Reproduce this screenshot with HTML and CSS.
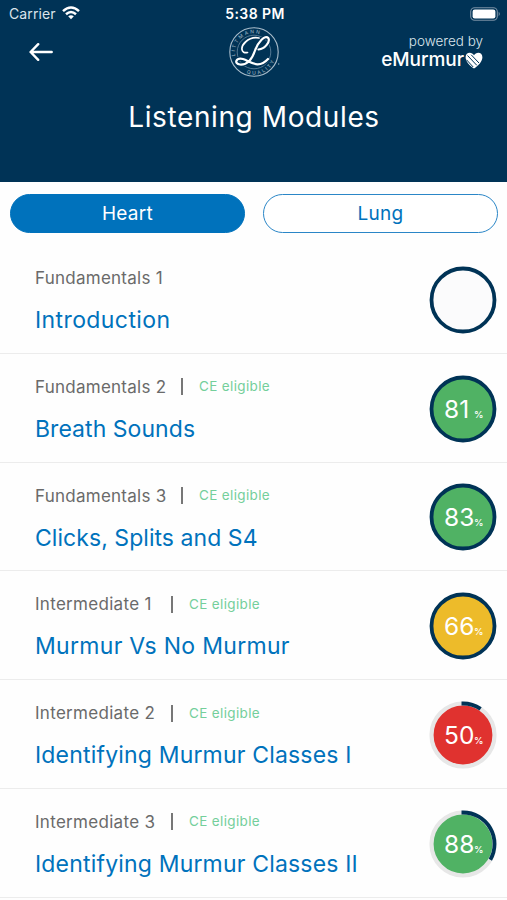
FILE: index.html
```
<!DOCTYPE html>
<html lang="en">
<head>
<meta charset="utf-8">
<title>Listening Modules</title>
<link rel="stylesheet" href="styles.css">
</head>
<body>
<header class="header">
  <div class="status">
    <div class="carrier">Carrier
      <svg class="wifi" width="18" height="14" viewBox="0 0 18 14" fill="none" stroke="#fff" stroke-width="2.5"><path d="M1 5.1Q9-2.1 17 5.1M4 8.2Q9 3.8 14 8.2"/><path d="M6.2 10.3Q9 8 11.8 10.3L9 13.3z" fill="#fff" stroke="none"/></svg>
    </div>
    <div class="time">5:38 PM</div>
    <svg class="battery" width="31" height="14" viewBox="0 0 31 14"><rect x=".7" y=".7" width="26.6" height="12.6" rx="4" fill="none" stroke="#7890a4" stroke-width="1.1"/><rect x="2.6" y="2.5" width="22.8" height="9" rx="2.2" fill="#fff"/><path d="M28.7 4.8q2.2 2.2 0 4.4z" fill="#7890a4"/></svg>
  </div>
  <div class="nav">
    <svg class="back" width="24" height="20" viewBox="0 0 24 20" fill="none" stroke="#fff" stroke-width="2.4" stroke-linecap="round" stroke-linejoin="round"><path d="M22.7 10H1.6M9.2 2.2 1.6 10l7.6 7.8"/></svg>
    <svg class="seal" width="52" height="52" viewBox="0 0 52 52" fill="none">
      <circle cx="26" cy="26" r="24.2" stroke="#a9bdcb" stroke-width="1.1"/>
      <circle cx="26" cy="26" r="16.8" stroke="#5f819b" stroke-width=".9"/>
      <path id="seal-top" d="M7.400 30.200A19 19 0 1 1 44.600 30.200"/>
      <path id="seal-bottom" d="M15 45.800A22.400 22.400 0 0 0 46.800 34"/>
      <text class="seal-text"><textPath href="#seal-top" startOffset="0">LITTMANN</textPath></text>
      <text class="seal-text"><textPath href="#seal-bottom" startOffset="4">QUALITY</textPath></text>
      <path class="letter-edge" d="M30.500 23.500C37 23 42.500 15.500 40.300 12C37 8.500 30 16 27 24.500C24 33.500 18.500 39 12 38.500C5.500 37.500 8 31.500 15 33C22 35 30 44 40 33"/>
      <path class="letter" d="M30.500 23.500C37 23 42.500 15.500 40.300 12C37 8.500 30 16 27 24.500C24 33.500 18.500 39 12 38.500C5.500 37.500 8 31.500 15 33C22 35 30 44 40 33"/>
      <path class="curl" d="M19.500 26.500C13 28 12 21 17.500 16C21 12.700 26 11 31 12"/>
      <circle cx="50.700" cy="38" r=".7" fill="#8fa8ba"/>
    </svg>
    <div class="brand">
      <div class="powered">powered by</div>
      <div class="name"><span>eMurmur</span>
        <svg width="18" height="17" viewBox="0 0 18 17"><path d="M9 3.200C11-.4 17.400-.3 17.400 5.200C17.400 9.600 13.500 13 10.200 15.800Q9 16.800 7.800 15.800C4.500 13 .6 9.600.6 5.200C.6-.3 7-.4 9 3.200z" fill="#fff"/><path d="M1.500 7.800 8.200 15M2.500 3.500 11.800 13.300M6.200 2.800 14 11" fill="none" stroke="#003356" stroke-width="1"/></svg>
      </div>
    </div>
  </div>
  <h1 class="title">Listening Modules</h1>
</header>
<nav class="tabs">
  <button class="tab active">Heart</button>
  <button class="tab">Lung</button>
</nav>
<main class="list">
  <section class="row">
    <div class="info"><div class="meta"><span class="level">Fundamentals 1</span></div><h2 class="module">Introduction</h2></div>
    <div class="score"><svg class="ring" viewBox="0 0 68 68"><circle class="full" cx="34" cy="34" r="31.500" fill="#fbfbfc"/></svg></div>
  </section>
  <section class="row">
    <div class="info"><div class="meta"><span class="level">Fundamentals 2</span><i class="bar"></i><span class="ce">CE eligible</span></div><h2 class="module tight">Breath Sounds</h2></div>
    <div class="score"><svg class="ring" viewBox="0 0 68 68"><circle class="full" cx="34" cy="34" r="31.500" fill="#50b264"/></svg><div class="value"><span>81</span><small>%</small></div></div>
  </section>
  <section class="row">
    <div class="info"><div class="meta"><span class="level">Fundamentals 3</span><i class="bar"></i><span class="ce">CE eligible</span></div><h2 class="module tight">Clicks, Splits and S4</h2></div>
    <div class="score"><svg class="ring" viewBox="0 0 68 68"><circle class="full" cx="34" cy="34" r="31.500" fill="#50b264"/></svg><div class="value"><span>83</span><small>%</small></div></div>
  </section>
  <section class="row">
    <div class="info"><div class="meta"><span class="level mid">Intermediate 1</span><i class="bar"></i><span class="ce">CE eligible</span></div><h2 class="module wide">Murmur Vs No Murmur</h2></div>
    <div class="score"><svg class="ring" viewBox="0 0 68 68"><circle class="full" cx="34" cy="34" r="31.500" fill="#edbb2a"/></svg><div class="value"><span>66</span><small>%</small></div></div>
  </section>
  <section class="row">
    <div class="info"><div class="meta"><span class="level mid">Intermediate 2</span><i class="bar"></i><span class="ce">CE eligible</span></div><h2 class="module snug">Identifying Murmur Classes I</h2></div>
    <div class="score"><svg class="ring" viewBox="0 0 68 68"><circle class="track" cx="34" cy="34" r="31.500" fill="#e0322f"/><path class="arc" d="M32.500 2.500H34A31.500 31.500 0 0 1 51.600 7.900"/></svg><div class="value"><span>50</span><small>%</small></div></div>
  </section>
  <section class="row">
    <div class="info"><div class="meta"><span class="level mid">Intermediate 3</span><i class="bar"></i><span class="ce">CE eligible</span></div><h2 class="module snug">Identifying Murmur Classes II</h2></div>
    <div class="score"><svg class="ring" viewBox="0 0 68 68"><circle class="track" cx="34" cy="34" r="31.500" fill="#50b264"/><path class="arc" d="M32.500 2.500H34A31.500 31.500 0 0 1 61.300 49.750"/></svg><div class="value"><span>88</span><small>%</small></div></div>
  </section>
</main>
</body>
</html>
```
FILE: styles.css
```
* { box-sizing: border-box; }
body {
  margin: 0;
  height: 900px;
  overflow: hidden;
  background: #fefefe;
  font-family: Inter, "Liberation Sans", sans-serif;
}
.header { height: 181.500px; background: #003356; color: #fff; }
.status {
  display: grid;
  grid-template-columns: 1fr auto 1fr;
  align-items: center;
  height: 27px;
  padding: 0 6px 0 9px;
  font-size: 14px;
}
.carrier { display: flex; align-items: center; gap: 6px; color: #dbe4eb; letter-spacing: .1px; }
.wifi { margin-top: -2px; }
.time { font-weight: 600; font-size: 14px; letter-spacing: .4px; }
.battery { justify-self: end; }
.nav {
  display: grid;
  grid-template-columns: 1fr 52px 1fr;
  height: 52px;
  padding: 0 24px 0 29px;
}
.back { margin-top: 15px; }
.seal { overflow: visible; margin: -1px 0 0 -2px; }
.seal-text { font-size: 5px; font-weight: 500; letter-spacing: 1.800px; fill: #8fa8ba; }
.letter-edge { stroke: #003356; stroke-width: 4.200; }
.letter { stroke: #fff; stroke-width: 2.200; stroke-linecap: round; }
.curl { stroke: #fff; stroke-width: 1.700; stroke-linecap: round; }
.brand { justify-self: end; text-align: right; padding-top: 6px; }
.powered { font-size: 13.500px; line-height: 17px; font-weight: 300; color: #dce5ec; }
.name { display: flex; align-items: center; gap: 1px; font-size: 19px; line-height: 20px; font-weight: 500; letter-spacing: -.05px; }
.title { margin: 21px 0 0 1px; text-align: center; font-size: 28px; line-height: 34px; font-weight: 400; letter-spacing: .6px; }
.tabs { display: flex; gap: 18px; padding: 12.500px 9px 0 10px; }
.tab {
  flex: 1;
  height: 39px;
  padding: 0;
  border: 1.300px solid #2a86c7;
  border-radius: 20px;
  background: #fff;
  color: #0072bc;
  font: 400 19px/38px Inter, sans-serif;
  letter-spacing: .3px;
}
.tab.active { background: #0072bc; color: #fff; border-color: #0072bc; }
.list { padding-top: 12px; }
.row {
  display: flex;
  justify-content: space-between;
  height: 108.750px;
  padding: 0 10px 0 35px;
  border-bottom: 1.500px solid #ececec;
}
.info { padding-top: 22px; }
.meta { display: flex; align-items: center; height: 22px; color: #6a6a6a; font-size: 17px; white-space: nowrap; }
.level { width: 131px; letter-spacing: .25px; }
.level.mid { width: 121px; letter-spacing: .3px; }
.bar { width: 1.500px; height: 17px; margin: 0 16.500px 0 15px; background: #777; }
.ce { position: relative; top: -.5px; color: #74cf9b; font-size: 13.500px; letter-spacing: .35px; }
.module { margin: 16px 0 0; color: #0072bc; font-size: 23px; line-height: 30px; font-weight: 400; letter-spacing: .4px; white-space: nowrap; }
.module.wide { letter-spacing: .3px; }
.module.snug { letter-spacing: .18px; }
.module.tight { letter-spacing: .05px; }
.score { position: relative; width: 68px; height: 68px; margin-top: 20.800px; }
.ring { display: block; width: 68px; height: 68px; }
.full, .arc { stroke: #003356; stroke-width: 3.800; }
.arc { fill: none; }
.track { stroke: #e7e7e7; stroke-width: 4.200; }
.value {
  position: absolute;
  inset: 0 0 0 15px;
  display: flex;
  align-items: baseline;
  color: #fff;
  font-size: 24.500px;
  line-height: 68px;
  white-space: nowrap;
}
.value span { width: 30px; }
.value small { font-size: 9.500px; font-weight: 500; line-height: 1; }
```
